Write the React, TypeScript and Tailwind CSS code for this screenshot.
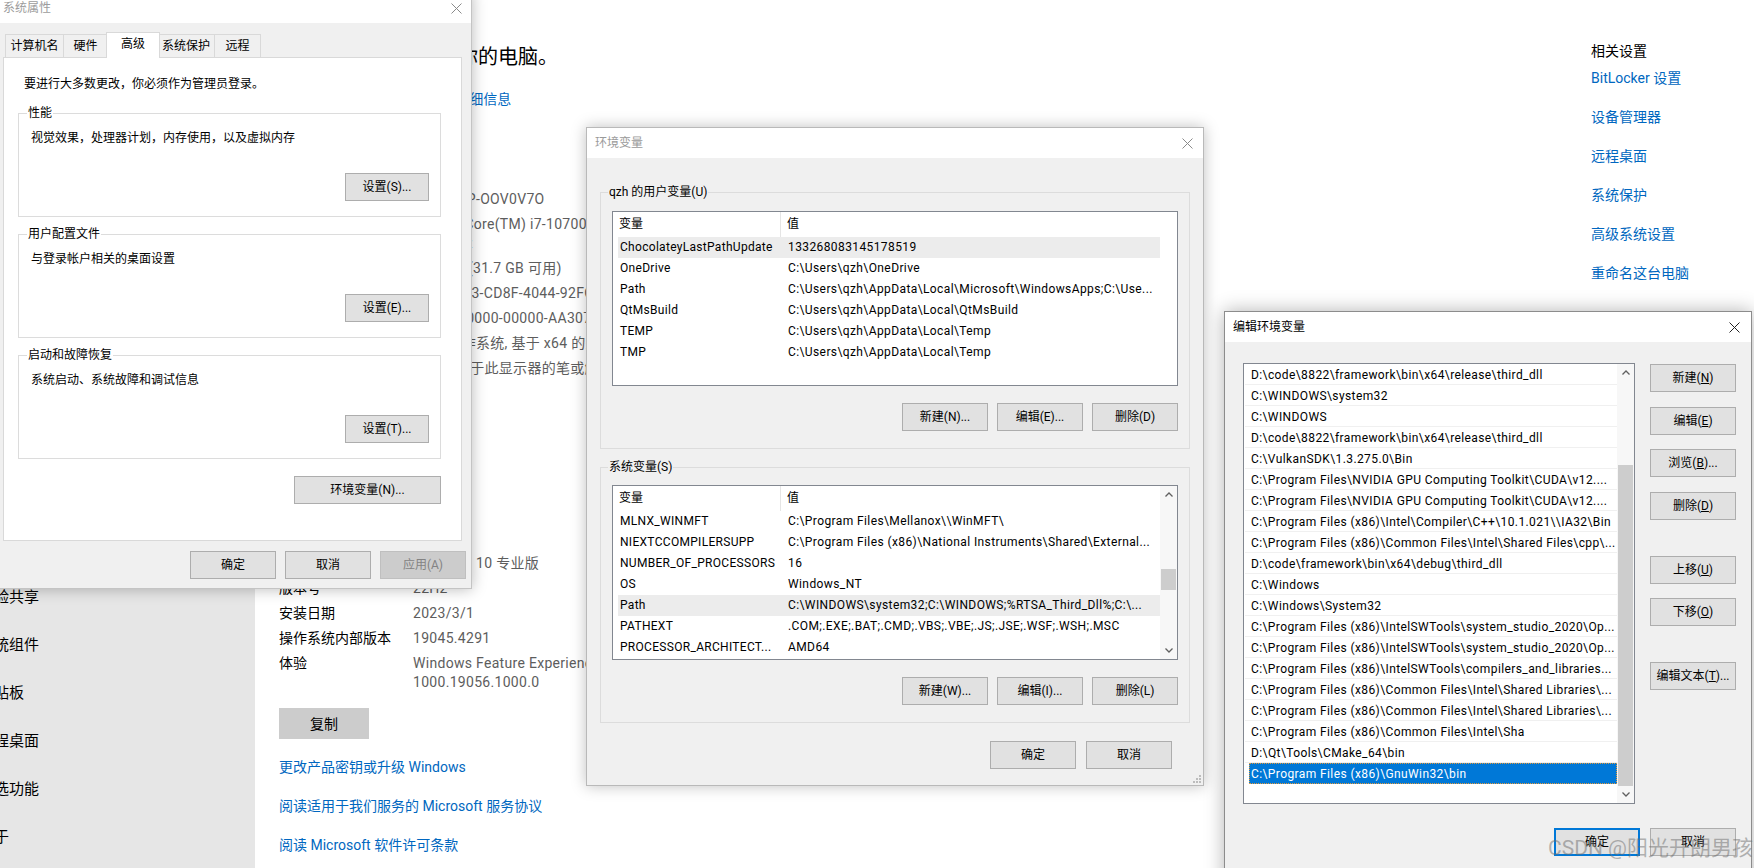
import React from "react";

// ---- shared bits ----

function CloseX({ c }: { c: string }) {
  return (
    <svg width="11" height="11" viewBox="0 0 11 11" fill="none">
      <path d="M0.5 0.5 L10.5 10.5 M10.5 0.5 L0.5 10.5" stroke={c} strokeWidth="1" />
    </svg>
  );
}

function Chevron({ up }: { up?: boolean }) {
  return (
    <svg width="8" height="5" viewBox="0 0 8 5" fill="none">
      <path
        d={up ? "M0.5 4.5 L4 1 L7.5 4.5" : "M0.5 0.5 L4 4 L7.5 0.5"}
        stroke="#606060"
        strokeWidth="1.3"
      />
    </svg>
  );
}

interface BtnProps {
  w: string;
  children: React.ReactNode;
  disabled?: boolean;
  primary?: boolean;
}

function Btn({ w, children, disabled, primary }: BtnProps) {
  const look = disabled
    ? "bg-[#cccccc] border border-[#bfbfbf] text-[#838383]"
    : primary
      ? "bg-[#e1e1e1] border-2 border-[#0078d7] text-black"
      : "bg-[#e1e1e1] border border-[#adadad] text-black";
  return (
    <div className={`${w} h-[28px] shrink-0 flex items-center justify-center text-[12px] whitespace-nowrap ${look}`}>
      {children}
    </div>
  );
}

// ---- background: Settings > 关于 ----

const nav = [
  "显示", "声音", "通知和操作", "专注助手", "电源和睡眠", "存储", "平板电脑", "多任务处理",
  "投影到此电脑", "体验共享", "系统组件", "剪贴板", "远程桌面", "可选功能", "关于",
];

const specs: [string, string[]][] = [
  ["设备名称", ["DESKTOP-OOV0V7O"]],
  ["处理器", ["Intel(R) Core(TM) i7-10700 CPU @ 2.90GHz", "2.90 GHz"]],
  ["机带 RAM", ["32.0 GB (31.7 GB 可用)"]],
  ["设备 ID", ["A51F30E3-CD8F-4044-92FC-7A15E0B1C9D2"]],
  ["产品 ID", ["00330-80000-00000-AA307"]],
  ["系统类型", ["64 位操作系统, 基于 x64 的处理器"]],
  ["笔和触控", ["没有可用于此显示器的笔或触控输入"]],
];

const winSpecs: [string, string[]][] = [
  ["版本", ["Windows 10 专业版"]],
  ["版本号", ["22H2"]],
  ["安装日期", ["2023/3/1"]],
  ["操作系统内部版本", ["19045.4291"]],
  ["体验", ["Windows Feature Experience Pack", "1000.19056.1000.0"]],
];

const related = ["BitLocker 设置", "设备管理器", "远程桌面", "系统保护", "高级系统设置", "重命名这台电脑"];

function SpecRow({ label, lines }: { label: string; lines: string[] }) {
  return (
    <div className="flex py-[3px] leading-[19px]">
      <div className="w-[134px] shrink-0">{label}</div>
      <div className="text-[#5d5d5d] whitespace-nowrap tracking-[0.3px]">
        {lines.map((l) => (
          <div key={l}>{l}</div>
        ))}
      </div>
    </div>
  );
}

function SettingsPage() {
  return (
    <div className="flex h-full">
      <aside className="w-[255px] shrink-0 bg-[#e6e6e6] pt-[141px] overflow-hidden">
        {nav.map((n) => (
          <div key={n} className="h-[48px] flex items-center">
            <span className="ml-[-21px] text-[15px] whitespace-nowrap">{n}</span>
          </div>
        ))}
      </aside>

      <main className="flex-1 pl-[24px] pt-[43px] text-[14px] leading-[20px]">
        <div className="text-[20px] leading-[28px] pl-[39px] whitespace-nowrap">正在监视和保护你的电脑。</div>
        <div className="mt-[18px] text-[#0067c0]">在 Windows 安全中心中查看详细信息</div>

        <div className="mt-[40px] text-[20px] leading-[28px]">设备规格</div>
        <div className="mt-[10px]">
          {specs.map(([l, v]) => (
            <SpecRow key={l} label={l} lines={v} />
          ))}
        </div>
        <div className="mt-[18px] w-[90px] h-[31px] bg-[#cccccc] flex items-center justify-center">复制</div>
        <div className="mt-[12px] w-[130px] h-[31px] bg-[#cccccc] flex items-center justify-center">重命名这台电脑</div>

        <div className="mt-[40px] text-[20px] leading-[28px]">Windows 规格</div>
        <div className="mt-[10px]">
          {winSpecs.map(([l, v]) => (
            <SpecRow key={l} label={l} lines={v} />
          ))}
        </div>
        <div className="mt-[13px] w-[90px] h-[31px] bg-[#cccccc] flex items-center justify-center">复制</div>
        <div className="mt-[18px] text-[#0067c0]">更改产品密钥或升级 Windows</div>
        <div className="mt-[19px] text-[#0067c0]">阅读适用于我们服务的 Microsoft 服务协议</div>
        <div className="mt-[19px] text-[#0067c0]">阅读 Microsoft 软件许可条款</div>
      </main>

      <aside className="w-[163px] shrink-0 pt-[41px] text-[14px] leading-[20px]">
        <div>相关设置</div>
        {related.map((r, i) => (
          <div key={r} className={`${i === 0 ? "mt-[7px]" : "mt-[19px]"} text-[#0067c0] whitespace-nowrap`}>
            {r}
          </div>
        ))}
      </aside>
    </div>
  );
}

// ---- 系统属性 ----

function Group({ label, desc, btn }: { label: string; desc: string; btn: string }) {
  return (
    <div className="relative border border-[#dcdcdc] h-[104px]">
      <span className="absolute top-[-9px] left-[8px] bg-white px-[1px] leading-[16px]">{label}</span>
      <div className="pt-[16px] pl-[12px] leading-[16px]">{desc}</div>
      <div className="flex justify-end pr-[11px] mt-[27px]">
        <Btn w="w-[84px]">{btn}</Btn>
      </div>
    </div>
  );
}

const tabs: [string, string][] = [
  ["计算机名", "w-[59px]"],
  ["硬件", "w-[45px]"],
  ["高级", "w-[54px]"],
  ["系统保护", "w-[58px]"],
  ["远程", "w-[47px]"],
];

function SystemProps() {
  return (
    <div className="absolute left-[-6px] top-[-8px] w-[478px] h-[597px] flex flex-col bg-[#f0f0f0] border border-[#c4c4c4] shadow-[0_0_14px_rgba(0,0,0,0.28)] text-[12px]">
      <div className="h-[30px] shrink-0 bg-white flex items-center justify-between pl-[8px] pr-[9px]">
        <span className="text-[#9c9c9c]">系统属性</span>
        <CloseX c="#8a8a8a" />
      </div>

      <div className="mt-[9px] ml-[10px] h-[25px] flex items-end">
        {tabs.map(([t, w], i) =>
          t === "高级" ? (
            <div
              key={t}
              className={`${w} h-[26px] -mb-px -mx-[2px] relative z-10 bg-white border border-b-0 border-[#d9d9d9] pb-[4px] flex items-center justify-center`}
            >
              {t}
            </div>
          ) : (
            <div
              key={t}
              className={`${w} ${i > 0 ? "-ml-px" : ""} h-[23px] bg-[#f0f0f0] border border-b-0 border-[#d9d9d9] flex items-center justify-center`}
            >
              {t}
            </div>
          )
        )}
      </div>

      <div className="ml-[8px] w-[459px] h-[484px] shrink-0 bg-white border border-[#d9d9d9] pt-[18px] pl-[14px] pr-[20px]">
        <div className="pl-[6px] leading-[16px]">要进行大多数更改，你必须作为管理员登录。</div>
        <div className="mt-[21px]">
          <Group label="性能" desc="视觉效果，处理器计划，内存使用，以及虚拟内存" btn="设置(S)..." />
        </div>
        <div className="mt-[17px]">
          <Group label="用户配置文件" desc="与登录帐户相关的桌面设置" btn="设置(E)..." />
        </div>
        <div className="mt-[17px]">
          <Group label="启动和故障恢复" desc="系统启动、系统故障和调试信息" btn="设置(T)..." />
        </div>
        <div className="mt-[17px] flex justify-end">
          <Btn w="w-[147px]">环境变量(N)...</Btn>
        </div>
      </div>

      <div className="mt-[10px] flex justify-end gap-[9px] pr-[5px]">
        <Btn w="w-[86px]">确定</Btn>
        <Btn w="w-[86px]">取消</Btn>
        <Btn w="w-[86px]" disabled>
          应用(A)
        </Btn>
      </div>
    </div>
  );
}

// ---- 环境变量 ----

const userRows: [string, string][] = [
  ["ChocolateyLastPathUpdate", "133268083145178519"],
  ["OneDrive", "C:\\Users\\qzh\\OneDrive"],
  ["Path", "C:\\Users\\qzh\\AppData\\Local\\Microsoft\\WindowsApps;C:\\Use..."],
  ["QtMsBuild", "C:\\Users\\qzh\\AppData\\Local\\QtMsBuild"],
  ["TEMP", "C:\\Users\\qzh\\AppData\\Local\\Temp"],
  ["TMP", "C:\\Users\\qzh\\AppData\\Local\\Temp"],
];

const sysRows: [string, string][] = [
  ["MLNX_WINMFT", "C:\\Program Files\\Mellanox\\\\WinMFT\\"],
  ["NIEXTCCOMPILERSUPP", "C:\\Program Files (x86)\\National Instruments\\Shared\\External..."],
  ["NUMBER_OF_PROCESSORS", "16"],
  ["OS", "Windows_NT"],
  ["Path", "C:\\WINDOWS\\system32;C:\\WINDOWS;%RTSA_Third_Dll%;C:\\..."],
  ["PATHEXT", ".COM;.EXE;.BAT;.CMD;.VBS;.VBE;.JS;.JSE;.WSF;.WSH;.MSC"],
  ["PROCESSOR_ARCHITECT...", "AMD64"],
];

function VarList({ rows, sel, scroll }: { rows: [string, string][]; sel: number; scroll?: boolean }) {
  return (
    <div className="h-[175px] border border-[#828790] bg-white flex overflow-hidden">
      <div className="w-[547px] shrink-0 pl-[5px]">
        <div className="h-[25px] flex leading-[25px]">
          <div className="w-[163px] shrink-0 border-r border-[#e5e5e5] pl-[1px]">变量</div>
          <div className="pl-[6px]">值</div>
        </div>
        {rows.map(([k, v], i) => (
          <div
            key={k}
            className={`flex h-[21px] leading-[21px] whitespace-nowrap ${i === sel ? "bg-[#ececec]" : ""}`}
          >
            <div className="w-[163px] shrink-0 pl-[2px] overflow-hidden tracking-[0.3px]">{k}</div>
            <div className="pl-[7px] overflow-hidden tracking-[0.4px]">{v}</div>
          </div>
        ))}
      </div>
      {scroll && (
        <div className="w-[17px] shrink-0 bg-[#f7f7f7] flex flex-col items-center">
          <div className="h-[17px] flex items-center justify-center">
            <Chevron up />
          </div>
          <div className="h-[66px]" />
          <div className="w-[15px] h-[21px] bg-[#cdcdcd]" />
          <div className="flex-1" />
          <div className="h-[17px] flex items-center justify-center">
            <Chevron />
          </div>
        </div>
      )}
    </div>
  );
}

function VarGroup({
  label,
  rows,
  sel,
  scroll,
  btns,
  box,
}: {
  label: string;
  rows: [string, string][];
  sel: number;
  scroll?: boolean;
  btns: string[];
  box: string;
}) {
  return (
    <div className={`relative border border-[#dcdcdc] px-[11px] ${box}`}>
      <span className="absolute top-[-9px] left-[7px] bg-[#f0f0f0] px-[1px] leading-[16px]">{label}</span>
      <VarList rows={rows} sel={sel} scroll={scroll} />
      <div className="mt-[17px] flex justify-end gap-[9px]">
        {btns.map((b) => (
          <Btn key={b} w="w-[86px]">
            {b}
          </Btn>
        ))}
      </div>
    </div>
  );
}

function EnvVars() {
  return (
    <div className="absolute left-[586px] top-[127px] w-[618px] h-[659px] flex flex-col bg-[#f0f0f0] border border-[#b9b9b9] shadow-[0_0_14px_rgba(0,0,0,0.25)] text-[12px]">
      <div className="h-[30px] shrink-0 bg-white flex items-center justify-between pl-[8px] pr-[10px]">
        <span className="text-[#9a9a9a]">环境变量</span>
        <CloseX c="#8a8a8a" />
      </div>
      <div className="px-[13px] pt-[34px] flex flex-col">
        <VarGroup
          label="qzh 的用户变量(U)"
          rows={userRows}
          sel={0}
          btns={["新建(N)...", "编辑(E)...", "删除(D)"]}
          box="h-[257px] pt-[18px]"
        />
        <div className="mt-[18px]">
          <VarGroup
            label="系统变量(S)"
            rows={sysRows}
            sel={4}
            scroll
            btns={["新建(W)...", "编辑(I)...", "删除(L)"]}
            box="h-[256px] pt-[17px]"
          />
        </div>
        <div className="mt-[18px] flex justify-end gap-[10px] pr-[18px]">
          <Btn w="w-[86px]">确定</Btn>
          <Btn w="w-[86px]">取消</Btn>
        </div>
      </div>
      {/* resize grip */}
      <svg className="absolute right-[2px] bottom-[2px]" width="10" height="10" viewBox="0 0 10 10">
        {[
          [8, 2],
          [8, 5],
          [5, 5],
          [8, 8],
          [5, 8],
          [2, 8],
        ].map(([x, y]) => (
          <rect key={`${x}-${y}`} x={x} y={y} width="2" height="2" fill="#bcbcbc" />
        ))}
      </svg>
    </div>
  );
}

// ---- 编辑环境变量 ----

const paths = [
  "D:\\code\\8822\\framework\\bin\\x64\\release\\third_dll",
  "C:\\WINDOWS\\system32",
  "C:\\WINDOWS",
  "D:\\code\\8822\\framework\\bin\\x64\\release\\third_dll",
  "C:\\VulkanSDK\\1.3.275.0\\Bin",
  "C:\\Program Files\\NVIDIA GPU Computing Toolkit\\CUDA\\v12....",
  "C:\\Program Files\\NVIDIA GPU Computing Toolkit\\CUDA\\v12....",
  "C:\\Program Files (x86)\\Intel\\Compiler\\C++\\10.1.021\\\\IA32\\Bin",
  "C:\\Program Files (x86)\\Common Files\\Intel\\Shared Files\\cpp\\...",
  "D:\\code\\framework\\bin\\x64\\debug\\third_dll",
  "C:\\Windows",
  "C:\\Windows\\System32",
  "C:\\Program Files (x86)\\IntelSWTools\\system_studio_2020\\Op...",
  "C:\\Program Files (x86)\\IntelSWTools\\system_studio_2020\\Op...",
  "C:\\Program Files (x86)\\IntelSWTools\\compilers_and_libraries...",
  "C:\\Program Files (x86)\\Common Files\\Intel\\Shared Libraries\\...",
  "C:\\Program Files (x86)\\Common Files\\Intel\\Shared Libraries\\...",
  "C:\\Program Files (x86)\\Common Files\\Intel\\Sha",
  "D:\\Qt\\Tools\\CMake_64\\bin",
  "C:\\Program Files (x86)\\GnuWin32\\bin",
];

const sideBtns: [string, string, string, string][] = [
  ["新建(", "N", ")", "mt-[1px]"],
  ["编辑(", "E", ")", "mt-[15px]"],
  ["浏览(", "B", ")...", "mt-[14px]"],
  ["删除(", "D", ")", "mt-[15px]"],
  ["上移(", "U", ")", "mt-[36px]"],
  ["下移(", "O", ")", "mt-[14px]"],
  ["编辑文本(", "T", ")...", "mt-[36px]"],
];

function EditEnv() {
  return (
    <div className="absolute left-[1224px] top-[311px] w-[528px] h-[600px] flex flex-col bg-[#f0f0f0] border border-[#8c8c8c] shadow-[0_0_18px_rgba(0,0,0,0.3)] text-[12px]">
      <div className="h-[30px] shrink-0 bg-white flex items-center justify-between pl-[8px] pr-[11px]">
        <span>编辑环境变量</span>
        <CloseX c="#222" />
      </div>

      <div className="flex pl-[18px] pt-[21px]">
        <div className="w-[392px] h-[441px] shrink-0 border border-[#828790] bg-white flex overflow-hidden">
          <div className="w-[373px] shrink-0 pl-[1px] tracking-[0.4px]">
            {paths.map((p, i) =>
              i === paths.length - 1 ? (
                <div
                  key={i}
                  className="h-[21px] ml-[4px] bg-[#0078d7] text-white border border-dotted border-[#e39a3c] pl-[1px] leading-[20px] whitespace-nowrap overflow-hidden"
                >
                  {p}
                </div>
              ) : (
                <div
                  key={i}
                  className="h-[21px] border-b border-[#f0f0f0] pl-[6px] leading-[22px] whitespace-nowrap overflow-hidden"
                >
                  {p}
                </div>
              )
            )}
          </div>
          <div className="w-[17px] shrink-0 bg-[#f7f7f7] flex flex-col items-center">
            <div className="h-[17px] flex items-center justify-center">
              <Chevron up />
            </div>
            <div className="flex-1" />
            <div className="w-[15px] h-[321px] bg-[#cdcdcd]" />
            <div className="h-[17px] flex items-center justify-center">
              <Chevron />
            </div>
          </div>
        </div>

        <div className="ml-[15px] flex flex-col">
          {sideBtns.map(([a, k, b, m]) => (
            <div key={a} className={m}>
              <Btn w="w-[86px]">
                {a}
                <span className="underline">{k}</span>
                {b}
              </Btn>
            </div>
          ))}
        </div>
      </div>

      <div className="mt-[24px] flex justify-end gap-[10px] pr-[15px]">
        <Btn w="w-[86px]" primary>
          确定
        </Btn>
        <Btn w="w-[86px]">取消</Btn>
      </div>
    </div>
  );
}

export default function App() {
  return (
    <div className="relative w-[1754px] h-[868px] overflow-hidden bg-white text-black font-['Roboto','Noto_Sans_CJK_SC',sans-serif]">
      <SettingsPage />
      <SystemProps />
      <EnvVars />
      <EditEnv />
      {/* CSDN watermark */}
      <div className="absolute left-[1548px] top-[835px] text-[21px] leading-[26px] text-[rgba(110,110,110,0.5)] whitespace-nowrap pointer-events-none">
        CSDN @阳光开朗男孩
      </div>
    </div>
  );
}
